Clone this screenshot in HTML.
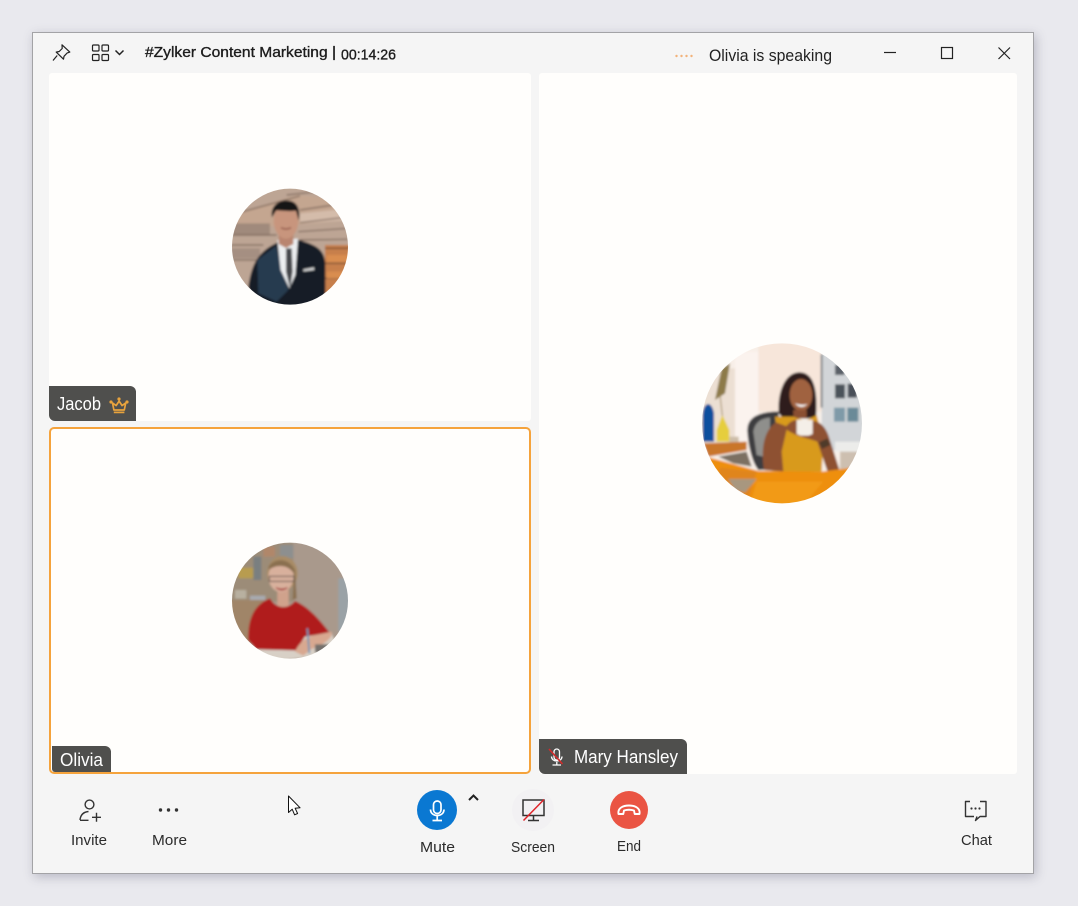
<!DOCTYPE html>
<html lang="en">
<head>
<meta charset="utf-8">
<title>#Zylker Content Marketing</title>
<style>
html,body{margin:0;padding:0;width:1078px;height:906px;overflow:hidden;background:#e9e9ee;font-family:"Liberation Sans",sans-serif}
.win{position:absolute;left:32px;top:32px;width:1000px;height:840px;background:#f5f5f5;border:1px solid #a3a3a6;box-shadow:2px 3px 10px rgba(60,60,90,.28)}
.p{position:absolute;background:#fffefc;box-sizing:border-box}
.tag{position:absolute;background:#4f4f4d}
svg.o{position:absolute;left:0;top:0}
</style>
</head>
<body>
<div class="win"></div>
<div class="p" style="left:49px;top:73px;width:482px;height:348px;border-radius:3px"></div>
<div class="p" style="left:49px;top:427px;width:482px;height:347px;border:2px solid #f5a33c;border-radius:5px"></div>
<div class="p" style="left:539px;top:73px;width:478px;height:701px;border-radius:3px"></div>
<div class="tag" style="left:49px;top:386px;width:87px;height:35px;border-radius:0 6px 0 6px"></div>
<div class="tag" style="left:52px;top:746px;width:59px;height:26px;border-radius:0 6px 0 3px"></div>
<div class="tag" style="left:539px;top:739px;width:148px;height:35px;border-radius:0 6px 0 6px"></div>

<svg class="o" width="1078" height="906" viewBox="0 0 1078 906" xmlns="http://www.w3.org/2000/svg" font-family="Liberation Sans, sans-serif">
<defs>
<clipPath id="cj"><circle cx="210" cy="200" r="174"/></clipPath>
<clipPath id="co"><circle cx="210" cy="197" r="174"/></clipPath>
<clipPath id="cm"><circle cx="276" cy="265" r="240"/></clipPath>
<filter id="b" x="-5%" y="-5%" width="110%" height="110%"><feGaussianBlur stdDeviation="3"/></filter>
</defs>

<!-- Title bar icons -->
<g fill="none" stroke="#222" stroke-width="1.2">
<path d="M62 44.800l7.800 7.300-2.800 1-3 3.200-.5 2.900-7.300-7.100 3-.6 3-3z" stroke-linejoin="round"/>
<path d="M57.200 55.500l-4.200 5"/>
<rect x="92.500" y="45" width="6.500" height="6" rx="1"/><rect x="102" y="45" width="6.500" height="6" rx="1"/>
<rect x="92.500" y="54.500" width="6.500" height="6" rx="1"/><rect x="102" y="54.500" width="6.500" height="6" rx="1"/>
<path d="M115.500 50.500l4 4 4-4" stroke-width="1.500"/>
<path d="M884 52.500h12"/>
<rect x="941.500" y="47.500" width="11" height="11"/>
<path d="M998.500 47.500l11.500 11.500M1010 47.500L998.500 59"/>
</g>
<g fill="#f2b27a"><circle cx="676.500" cy="56" r="1.200"/><circle cx="681.500" cy="56" r="1.200"/><circle cx="686.500" cy="56" r="1.200"/><circle cx="691.500" cy="56" r="1.200"/></g>

<text x="145" y="57" font-size="15" stroke="#1d1d1d" stroke-width=".35" fill="#1d1d1d" textLength="191" lengthAdjust="spacingAndGlyphs">#Zylker Content Marketing |</text>
<text x="341" y="59.500" font-size="15" stroke="#1d1d1d" stroke-width=".35" fill="#1d1d1d" textLength="55" lengthAdjust="spacingAndGlyphs">00:14:26</text>
<text x="709" y="61" font-size="17" fill="#222" textLength="123" lengthAdjust="spacingAndGlyphs">Olivia is speaking</text>

<!-- Jacob avatar -->
<g transform="translate(220,180) scale(.33333)">
<g clip-path="url(#cj)"><g filter="url(#b)">
<rect x="30" y="20" width="360" height="360" fill="#bda594"/>
<path d="M30 105L230 45L390 60V120L30 150z" fill="#c4a690"/>
<path d="M30 130H150V165H30z" fill="#a08a7c"/>
<path d="M30 205H120V235H30z" fill="#a58f82"/>
<path d="M240 100L390 85V120L240 130z" fill="#d4bcaa"/>
<path d="M50 100L240 48M200 45L290 35M240 90L360 72M240 128L375 112M235 155L385 145M30 165H170M30 195H130M30 240H115M240 180L385 178" stroke="#7a6559" stroke-width="3.500" fill="none"/>
<path d="M315 195H390V340H315z" fill="#c77f4c"/>
<path d="M315 205H390M315 250H390M315 295H390" stroke="#6b4430" stroke-width="3.500"/>
<path d="M320 225h70v22h-70zM320 275h70v20h-70z" fill="#d98d50"/>
<path d="M85 320C95 250 115 215 172 188L238 180C285 195 312 205 316 250V390H100z" fill="#121c28"/>
<path d="M112 240L168 198L205 330L170 365L115 340z" fill="#263a50"/>
<path d="M172 180L234 176L226 285L208 325L182 270z" fill="#eceef0"/>
<path d="M198 205h17l3 70-8 50-12-50z" fill="#45474c"/>
<path d="M250 268l32-6 1 8-33 4z" fill="#d8d8d8"/>
<path d="M176 160h44v32l-22 12-22-12z" fill="#b98570"/>
<ellipse cx="198" cy="122" rx="37" ry="54" fill="#c8957d"/>
<path d="M156 112C150 75 178 60 205 62C234 64 242 92 236 122L228 92C205 96 180 90 168 92z" fill="#161313"/>
<path d="M183 143q15 8 30 0" stroke="#8a4a40" stroke-width="4" fill="none"/>
</g></g>
</g>

<!-- Olivia avatar -->
<g transform="translate(220,535) scale(.33333)">
<g clip-path="url(#co)"><g filter="url(#b)">
<rect x="30" y="20" width="360" height="360" fill="#a9998c"/>
<rect x="355" y="130" width="35" height="160" fill="#9aa2a6"/>
<rect x="30" y="20" width="190" height="180" fill="#9c8c78"/>
<rect x="55" y="98" width="45" height="32" fill="#b89c50"/>
<rect x="100" y="65" width="24" height="70" fill="#7a7f80"/>
<rect x="130" y="35" width="35" height="30" fill="#b0876a"/>
<rect x="180" y="30" width="40" height="40" fill="#8d8f8f"/>
<rect x="45" y="165" width="34" height="26" fill="#b8b0a0"/>
<rect x="90" y="182" width="46" height="16" fill="#a8aab0"/>
<rect x="30" y="195" width="110" height="130" fill="#a08568"/>
<ellipse cx="187" cy="115" rx="46" ry="52" fill="#a98c66"/>
<path d="M172 160h34v55h-34z" fill="#d0a28c"/>
<ellipse cx="183" cy="125" rx="38" ry="46" fill="#d8b09c"/>
<path d="M146 95C160 70 205 65 225 105L230 190L218 195L222 115C200 85 165 90 146 105z" fill="#8a7050"/>
<path d="M148 124h74v15h-74z" fill="none" stroke="#5c5048" stroke-width="3"/>
<path d="M168 158q17 14 34 0q-17 8-34 0z" fill="#fff" stroke="#a83a3a" stroke-width="3"/>
<path d="M85 315C82 245 108 205 150 190C165 218 200 228 225 198C265 215 300 255 328 292L255 305L228 350H115z" fill="#b01e1e"/>
<path d="M110 343L228 346L255 305L335 295L345 320L290 365L130 380z" fill="#d8d0c6"/>
<path d="M225 350C240 318 260 308 280 302L335 290C340 315 300 332 275 342L250 362z" fill="#d8a890"/>
<path d="M262 280l6 75" stroke="#6a95b8" stroke-width="5"/>
<rect x="285" y="328" width="60" height="25" fill="#75706c"/>
</g></g>
</g>

<!-- Mary avatar -->
<g transform="translate(690,335) scale(.33333)">
<g clip-path="url(#cm)"><g filter="url(#b)">
<rect x="30" y="20" width="500" height="500" fill="#f8efe8"/>
<rect x="205" y="20" width="190" height="210" fill="#f7e6da"/>
<rect x="135" y="50" width="70" height="270" fill="#fbf3ee"/>
<rect x="30" y="100" width="105" height="230" fill="#ecdfd3"/>
<path d="M75 195L95 100L120 85L105 175z" fill="#8d7a48"/>
<path d="M90 180l8 70" stroke="#a08a5c" stroke-width="3"/>
<path d="M38 240C40 200 65 195 72 235V320H38z" fill="#10509e"/>
<path d="M80 285L97 240L118 285V320H80z" fill="#e6ce3c"/>
<rect x="118" y="305" width="28" height="30" fill="#cdbda8"/>
<rect x="395" y="55" width="125" height="290" fill="#d2d5d8"/>
<rect x="392" y="58" width="6" height="160" fill="#7f8388"/>
<rect x="435" y="90" width="28" height="30" fill="#5a6068"/>
<rect x="435" y="148" width="30" height="42" fill="#4c525a"/>
<rect x="473" y="146" width="28" height="42" fill="#4a5058"/>
<rect x="432" y="218" width="33" height="42" fill="#7f9aa8"/>
<rect x="472" y="218" width="33" height="42" fill="#6a8a98"/>
<rect x="435" y="320" width="80" height="30" fill="#ececea"/>
<path d="M40 325L170 320V345L55 365z" fill="#c9762c"/>
<path d="M85 365L170 350L185 395L130 385z" fill="#7c6f62"/>
<path d="M450 350H510V400L450 410z" fill="#cdbfb0"/>
<path d="M172 290C170 250 200 230 265 230L280 400L205 405C185 380 175 330 172 290z" fill="#3c3d40"/>
<path d="M190 290C195 260 215 250 240 248L240 370L200 360z" fill="#8f8f8c"/>
<path d="M266 235C262 170 285 115 325 112C365 110 385 150 378 245L355 250H280z" fill="#2f1d1a"/>
<ellipse cx="333" cy="180" rx="34" ry="48" fill="#a0623f"/>
<path d="M315 205q18 20 38 2q-18 6-38-2z" fill="#fff"/>
<path d="M310 225h40v25h-40z" fill="#8a4f32"/>
<path d="M255 245L310 245L345 258L380 240L400 320L395 410H275z" fill="#d89a1e"/>
<path d="M222 405C212 340 222 285 258 262L292 275L275 350L280 410z" fill="#8e5130"/>
<path d="M285 280C300 255 320 248 345 262C375 250 400 262 415 300L450 410L412 408L382 320C360 310 315 305 285 280z" fill="#8e5130"/>
<path d="M320 255h48v42l-12 5h-24l-12-5z" fill="#f4efe8"/>
<rect x="390" y="315" width="28" height="22" fill="#4f3a2c" transform="rotate(-25 404 326)"/>
<path d="M60 368L205 408L395 410L470 400L510 390V520H30V400z" fill="#ee8f10"/>
<path d="M90 398L200 410L170 510L60 500z" fill="#e0851a"/>
<path d="M115 432H200L165 472L135 465z" fill="#a8977f"/>
<path d="M200 440h200l-60 70H180z" fill="#f29a14"/>
</g></g>
</g>

<!-- Tag contents -->
<text x="57" y="410" font-size="18" fill="#fff" textLength="44" lengthAdjust="spacingAndGlyphs">Jacob</text>
<g fill="none" stroke="#e8a33d" stroke-width="1.700" stroke-linejoin="round">
<path d="M112.500 403l3.600 2.600 3-4.500 3 4.500 3.600-2.600-1.400 7h-10.400z"/>
<path d="M113.800 412.400h10.600"/>
</g>
<g fill="#e8a33d"><circle cx="119" cy="399" r="1.600"/><circle cx="111" cy="402" r="1.600"/><circle cx="127" cy="402" r="1.600"/></g>
<text x="60" y="766" font-size="18" fill="#fff" textLength="43" lengthAdjust="spacingAndGlyphs">Olivia</text>
<text x="574" y="763" font-size="18" fill="#fff" textLength="104" lengthAdjust="spacingAndGlyphs">Mary Hansley</text>
<g fill="none" stroke="#fff" stroke-width="1.300">
<rect x="554" y="749" width="5.500" height="11" rx="2.750"/>
<path d="M551.500 756.500c0 6 10.500 6 10.500 0M556.800 762v3M552.500 765h8.500"/>
</g>
<path d="M549 749l13.500 15" stroke="#d42a2a" stroke-width="1.600"/>

<!-- Invite -->
<g fill="none" stroke="#333" stroke-width="1.400">
<circle cx="89.500" cy="804.500" r="4.400"/>
<path d="M80 820c.5-5 3.500-8 8.500-8.500M80 820.300h8.500M92 817.300h9M96.500 812.800v9"/>
</g>
<text x="71" y="845" font-size="15" fill="#2b2b2b" textLength="36" lengthAdjust="spacingAndGlyphs">Invite</text>
<!-- More -->
<g fill="#333"><circle cx="160.500" cy="810" r="1.700"/><circle cx="168.500" cy="810" r="1.700"/><circle cx="176.500" cy="810" r="1.700"/></g>
<text x="152" y="845" font-size="15" fill="#2b2b2b" textLength="35" lengthAdjust="spacingAndGlyphs">More</text>

<!-- Cursor -->
<path d="M288.500 796v16.500l3.700-3.300 2.400 5.600 3-1.300-2.500-5.300 5-.4z" fill="#fff" stroke="#111" stroke-width="1" stroke-linejoin="round"/>

<!-- Mute -->
<circle cx="437" cy="810" r="20" fill="#0a78d2"/>
<g fill="none" stroke="#fff" stroke-width="1.700">
<rect x="433.500" y="801" width="7.500" height="12.500" rx="3.700"/>
<path d="M430.500 809.500c0 8 13.500 8 13.500 0M437.200 816v4M432.500 820.500h9.500"/>
</g>
<path d="M469 800l4.500-4.500 4.500 4.500" fill="none" stroke="#222" stroke-width="2"/>
<text x="420" y="852" font-size="15" fill="#2b2b2b" textLength="35" lengthAdjust="spacingAndGlyphs">Mute</text>

<!-- Screen -->
<circle cx="533" cy="810" r="21" fill="#f2f1f3"/>
<g fill="none" stroke="#333" stroke-width="1.500">
<rect x="523" y="800" width="21" height="15.500"/>
<path d="M533.500 816v4M528 820.500h11"/>
</g>
<path d="M523.500 820.500L544 799.500" stroke="#e0242a" stroke-width="1.500"/>
<text x="511" y="852" font-size="15" fill="#2b2b2b" textLength="44" lengthAdjust="spacingAndGlyphs">Screen</text>

<!-- End -->
<circle cx="629" cy="810" r="19" fill="#ea5443"/>
<path d="M618.500 814c-1-6 4.500-8.500 10.500-8.500s11.500 2.500 10.500 8.500h-4.800l-.7-3.500c-3.300-1-6.700-1-10 0l-.7 3.500z" fill="none" stroke="#fff" stroke-width="1.900" stroke-linejoin="round"/>
<text x="617" y="851" font-size="15" fill="#2b2b2b" textLength="24" lengthAdjust="spacingAndGlyphs">End</text>

<!-- Chat -->
<path d="M970 801.500h-4.500v15h8.500M980 801.500h6v15h-6l-4.500 4 1.500-4" fill="none" stroke="#333" stroke-width="1.400" stroke-linejoin="round"/>
<g fill="#333"><circle cx="971.500" cy="808.500" r="1.100"/><circle cx="975.500" cy="808.500" r="1.100"/><circle cx="979.500" cy="808.500" r="1.100"/></g>
<text x="961" y="845" font-size="15" fill="#2b2b2b" textLength="31" lengthAdjust="spacingAndGlyphs">Chat</text>
</svg>
</body>
</html>
